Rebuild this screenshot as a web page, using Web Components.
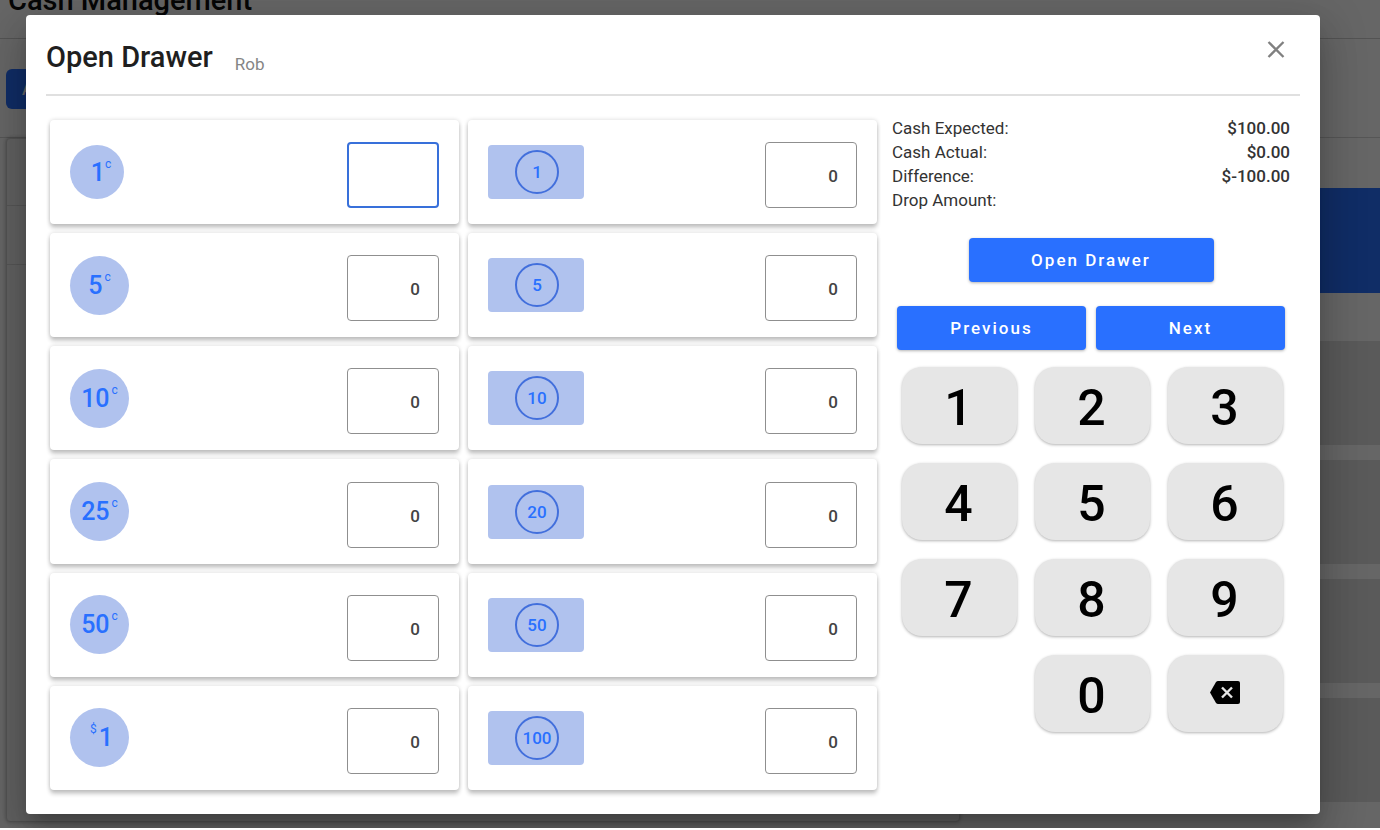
<!DOCTYPE html>
<html lang="en">
<head>
<meta charset="utf-8">
<meta name="viewport" content="width=device-width, initial-scale=1">
<title>Cash Management</title>
<style>
  :root {
    --brand: #2970ff;
    --brand-soft: #b0c2ee;
    --text: #1f1f1f;
    --text-body: #333;
    --text-muted: #858585;
    --line: #e0e0e0;
    --key: #e6e6e6;
  }
  body {
    margin: 0;
    background: #fff;
    color: var(--text-body);
    font-family: Roboto, "Liberation Sans", sans-serif;
    font-size: 16px;
  }
</style>
</head>
<body>
<cash-app>
  <cash-backdrop></cash-backdrop>
  <drawer-dialog slot="dialog" heading="Open Drawer" user="Rob">
    <denomination-grid></denomination-grid>
    <drawer-summary slot="side"></drawer-summary>
    <drawer-actions slot="side"></drawer-actions>
    <key-pad slot="side"></key-pad>
  </drawer-dialog>
</cash-app>

<script>
class CashApp extends HTMLElement {
  constructor() {
    super();
    this.attachShadow({ mode: 'open' });
  }

  connectedCallback() {
    this.shadowRoot.innerHTML = `
      <style>
        :host {
          display: grid;
          min-height: calc(100vh - 2px);
          overflow: hidden;
        }
        .page, .scrim {
          grid-area: 1 / 1;
          min-width: 0;
        }
        .page {
          height: 0;
          min-height: 100%;
          overflow: hidden;
        }
        .scrim {
          display: flex;
          z-index: 1;
          padding: 15px 60px 14px 26px;
          background: rgba(0, 0, 0, 0.6);
        }
        ::slotted(drawer-dialog) {
          flex: 1;
          min-width: 0;
        }
      </style>
      <div class="page"><slot></slot></div>
      <div class="scrim"><slot name="dialog"></slot></div>
    `;
    this.addEventListener('key-press', e => this.grid.press(e.detail.key));
    this.addEventListener('step', e => this.grid.step(e.detail.by));
  }

  get grid() {
    return this.querySelector('denomination-grid');
  }
}

// The cash management screen that stays visible around the dialog
class CashBackdrop extends HTMLElement {
  constructor() {
    super();
    this.attachShadow({ mode: 'open' });
  }

  connectedCallback() {
    this.shadowRoot.innerHTML = `
      <style>
        :host {
          display: block;
          margin-top: -20px;
        }
        h1 {
          margin: 0;
          padding: 0 8px;
          height: 59px;
          border-bottom: 1px solid #d0d0d0;
          font-size: 29px;
          line-height: 40px;
          font-weight: 500;
          color: #111;
          box-sizing: border-box;
        }
        .toolbar {
          padding: 30px 6px 28px;
        }
        .toolbar button {
          width: 140px;
          height: 40px;
          padding: 0 16px;
          border: 0;
          border-radius: 6px;
          background: var(--brand);
          color: #fff;
          font: 500 16px Roboto, sans-serif;
          text-align: left;
        }
        .columns {
          display: grid;
          grid-template-columns: 25fr 11fr;
          padding-left: 6px;
          border-top: 1px solid #d8d8d8;
        }
        .sheet {
          height: 682px;
          border: 1px solid #d0d0d0;
          border-radius: 4px;
          box-shadow: 0 0 4px rgba(0, 0, 0, 0.3);
          background: #f2f2f2;
        }
        .sheet div {
          margin-top: 66px;
          height: 58px;
          border: solid #d8d8d8;
          border-width: 1px 0;
        }
        .tiles {
          display: grid;
          gap: 15px;
          align-content: start;
          padding-top: 50px;
        }
        .banner {
          height: 105px;
          margin-bottom: 33px;
          background: var(--brand);
        }
        .tile {
          height: 104px;
          background: #e0e0e0;
        }
      </style>
      <h1>Cash Management</h1>
      <div class="toolbar"><button type="button" tabindex="-1">A</button></div>
      <div class="columns">
        <div class="sheet"><div></div></div>
        <div class="tiles">
          <div class="banner"></div>
          <div class="tile"></div>
          <div class="tile"></div>
          <div class="tile"></div>
          <div class="tile"></div>
        </div>
      </div>
    `;
  }
}

class DrawerDialog extends HTMLElement {
  constructor() {
    super();
    this.attachShadow({ mode: 'open' });
  }

  connectedCallback() {
    this.setAttribute('role', 'dialog');
    this.setAttribute('aria-label', this.getAttribute('heading'));
    this.shadowRoot.innerHTML = `
      <style>
        :host {
          display: flex;
          flex-direction: column;
          box-sizing: border-box;
          padding: 0 20px 24px;
          border-radius: 4px;
          background: #fff;
          box-shadow: 0 11px 15px -7px rgba(0, 0, 0, 0.2),
            0 24px 38px 3px rgba(0, 0, 0, 0.14),
            0 9px 46px 8px rgba(0, 0, 0, 0.12);
        }
        header {
          display: flex;
          align-items: flex-start;
          height: 81px;
          box-sizing: border-box;
          padding-top: 22px;
          border-bottom: 2px solid var(--line);
        }
        h2 {
          margin: 0;
          font-size: 29px;
          line-height: 40px;
          font-weight: 500;
          color: var(--text);
        }
        .user {
          flex: 1;
          margin-left: 22px;
          padding-top: 15px;
          font-size: 17px;
          line-height: 24px;
          color: var(--text-muted);
        }
        .close {
          width: 24px;
          height: 24px;
          margin-right: 12px;
          padding: 0;
          border: 0;
          background: none;
          cursor: pointer;
        }
        .close svg {
          display: block;
        }
        .body {
          flex: 1;
          display: grid;
          grid-template-columns: minmax(0, 1fr) 398px;
          gap: 15px;
          padding: 24px 10px 0 4px;
        }
        .side {
          display: flex;
          flex-direction: column;
        }
      </style>
      <header>
        <h2>${this.getAttribute('heading')}</h2>
        <span class="user">${this.getAttribute('user')}</span>
        <button class="close" type="button" aria-label="Close">
          <svg width="24" height="24" viewBox="0 0 24 24" fill="none" stroke="#808080" stroke-width="2.300">
            <path d="M4.500 5l15 15M19.500 5l-15 15"/>
          </svg>
        </button>
      </header>
      <div class="body">
        <slot></slot>
        <div class="side"><slot name="side"></slot></div>
      </div>
    `;
    this.shadowRoot.querySelector('.close').addEventListener('click', () => this.remove());
  }
}

class DenominationGrid extends HTMLElement {
  constructor() {
    super();
    this.attachShadow({ mode: 'open' });
    this.active = 0;
    this.items = [
      { type: 'penny', value: '1', unit: 'c' },
      { type: 'coin', value: '5', unit: 'c' },
      { type: 'coin', value: '10', unit: 'c' },
      { type: 'coin', value: '25', unit: 'c' },
      { type: 'coin', value: '50', unit: 'c' },
      { type: 'coin', value: '1', unit: '$' },
      { type: 'bill', value: '1' },
      { type: 'bill', value: '5' },
      { type: 'bill', value: '10' },
      { type: 'bill', value: '20' },
      { type: 'bill', value: '50' },
      { type: 'bill', value: '100' }
    ];
  }

  connectedCallback() {
    this.shadowRoot.innerHTML = `
      <style>
        :host {
          display: grid;
          grid-auto-flow: column;
          grid-template-rows: repeat(6, 1fr);
          grid-auto-columns: minmax(0, 1fr);
          gap: 9px;
        }
      </style>
      ${this.items.map((item, i) => `
        <denomination-card type="${item.type}" value="${item.value}" unit="${item.unit || ''}"
          count="${i === this.active ? '' : '0'}" ${i === this.active ? 'active' : ''}></denomination-card>
      `).join('')}
    `;
    this.cards = [...this.shadowRoot.querySelectorAll('denomination-card')];
  }

  step(by) {
    this.cards[this.active].removeAttribute('active');
    this.active = (this.active + by + this.cards.length) % this.cards.length;
    this.cards[this.active].setAttribute('active', '');
  }

  press(key) {
    const input = this.cards[this.active].input;
    if (key === 'back') {
      input.value = input.value.slice(0, -1);
      return;
    }
    input.value = input.value === '0' ? key : input.value + key;
  }
}

class DenominationCard extends HTMLElement {
  constructor() {
    super();
    this.attachShadow({ mode: 'open' });
  }

  get input() {
    return this.shadowRoot.querySelector('input');
  }

  connectedCallback() {
    const type = this.getAttribute('type');
    const value = this.getAttribute('value');
    const unit = this.getAttribute('unit');
    const sup = unit ? `<sup>${unit}</sup>` : '';
    const face = unit === '$' ? sup + value : value + sup;

    this.shadowRoot.innerHTML = `
      <style>
        :host {
          display: flex;
          align-items: center;
          justify-content: space-between;
          box-sizing: border-box;
          min-height: 96px;
          padding: 0 20px;
          border-radius: 4px;
          background: #fff;
          box-shadow: 0 4px 4px rgba(0, 0, 0, 0.2), 0 0 4px rgba(0, 0, 0, 0.16);
        }
        label {
          display: flex;
          align-items: center;
          justify-content: center;
          box-sizing: border-box;
          background: var(--brand-soft);
          color: var(--brand);
          font-weight: 500;
        }
        .penny, .coin {
          width: 59px;
          height: 59px;
          border-radius: 50%;
          font-size: 25px;
        }
        .penny {
          width: 54px;
          height: 54px;
          padding-left: 8px;
        }
        .coin {
          padding-left: 2px;
        }
        sup {
          align-self: flex-start;
          padding: 13px 2px 0;
          font-size: 12px;
          line-height: 16px;
          font-weight: 400;
        }
        .penny sup {
          padding: 11px 0 0;
        }
        .bill {
          width: 96px;
          height: 54px;
          padding-left: 2px;
          border-radius: 4px;
          font-size: 17px;
        }
        .bill span {
          display: flex;
          align-items: center;
          justify-content: center;
          width: 40px;
          height: 40px;
          border: 2px solid #426fdc;
          border-radius: 50%;
        }
        input {
          box-sizing: border-box;
          width: 92px;
          height: 66px;
          margin: 6px 0 0;
          padding: 2px 18px 0 8px;
          border: 1px solid #8f8f8f;
          border-radius: 4px;
          outline: 0;
          background: #fff;
          color: #444;
          font: 500 17px Roboto, sans-serif;
          text-align: right;
        }
        :host([active]) input {
          border: 2px solid #3870da;
        }
      </style>
      <label class="${type}" for="count">${type === 'bill' ? `<span>${value}</span>` : face}</label>
      <input id="count" type="text" inputmode="numeric" value="${this.getAttribute('count')}">
    `;
  }
}

class DrawerSummary extends HTMLElement {
  constructor() {
    super();
    this.attachShadow({ mode: 'open' });
    this.rows = [
      ['Cash Expected:', '$100.00'],
      ['Cash Actual:', '$0.00'],
      ['Difference:', '$-100.00'],
      ['Drop Amount:', '']
    ];
  }

  connectedCallback() {
    this.shadowRoot.innerHTML = `
      <style>
        :host {
          display: block;
          margin-top: -4px;
        }
        dl {
          display: grid;
          grid-template-columns: 1fr auto;
          grid-auto-rows: 24px;
          margin: 0;
          font-size: 17px;
          line-height: 24px;
        }
        dd {
          margin: 0;
          text-align: right;
          font-weight: 500;
        }
      </style>
      <dl>${this.rows.map(([name, amount]) => `<dt>${name}</dt><dd>${amount}</dd>`).join('')}</dl>
    `;
  }
}

class DrawerActions extends HTMLElement {
  constructor() {
    super();
    this.attachShadow({ mode: 'open' });
  }

  connectedCallback() {
    this.shadowRoot.innerHTML = `
      <style>
        :host {
          display: grid;
          grid-template-columns: 1fr 1fr;
          gap: 24px 10px;
          padding: 26px 5px 0;
        }
        button {
          height: 44px;
          padding: 0;
          border: 0;
          border-radius: 4px;
          background: var(--brand);
          box-shadow: 0 1px 3px rgba(0, 0, 0, 0.3);
          color: #fff;
          font: 500 17px Roboto, sans-serif;
          letter-spacing: 2px;
          cursor: pointer;
        }
        .open {
          grid-column: 1 / -1;
          justify-self: center;
          width: 245px;
        }
      </style>
      <button class="open" type="button">Open Drawer</button>
      <button type="button" data-by="-1">Previous</button>
      <button type="button" data-by="1">Next</button>
    `;

    this.shadowRoot.querySelectorAll('[data-by]').forEach(button => {
      button.addEventListener('click', () => {
        this.dispatchEvent(new CustomEvent('step', {
          detail: { by: Number(button.dataset.by) },
          bubbles: true,
          composed: true
        }));
      });
    });
  }
}

class KeyPad extends HTMLElement {
  constructor() {
    super();
    this.attachShadow({ mode: 'open' });
    this.keys = ['1', '2', '3', '4', '5', '6', '7', '8', '9', '0', 'back'];
  }

  connectedCallback() {
    const icon = `
      <svg width="30" height="23" viewBox="0 0 30 23" aria-hidden="true">
        <path fill="#000" d="M8 0h20q2 0 2 2v19q0 2-2 2H8q-1 0-2-1L0 11.500 6 1q1-1 2-1z"/>
        <path fill="none" stroke="#e6e6e6" stroke-width="2.400" d="M12 6.500l10 10M22 6.500l-10 10"/>
      </svg>`;

    this.shadowRoot.innerHTML = `
      <style>
        :host {
          display: grid;
          grid-template-columns: repeat(3, 1fr);
          grid-auto-rows: 77px;
          gap: 19px 18px;
          padding: 17px 7px 0 10px;
        }
        button {
          display: flex;
          align-items: center;
          justify-content: center;
          padding: 4px 2px 0 0;
          border: 0;
          border-radius: 20px;
          background: var(--key);
          box-shadow: 0 1px 3px rgba(0, 0, 0, 0.3);
          color: #000;
          font: 500 50px Roboto, sans-serif;
          cursor: pointer;
        }
        [data-key="0"] {
          grid-column: 2;
        }
        [data-key="back"] {
          padding: 0 2px 2px 0;
        }
      </style>
      ${this.keys.map(key => `
        <button type="button" data-key="${key}" ${key === 'back' ? 'aria-label="Backspace"' : ''}>${key === 'back' ? icon : key}</button>
      `).join('')}
    `;

    this.shadowRoot.querySelectorAll('button').forEach(button => {
      button.addEventListener('click', () => {
        this.dispatchEvent(new CustomEvent('key-press', {
          detail: { key: button.dataset.key },
          bubbles: true,
          composed: true
        }));
      });
    });
  }
}

customElements.define('cash-app', CashApp);
customElements.define('cash-backdrop', CashBackdrop);
customElements.define('drawer-dialog', DrawerDialog);
customElements.define('denomination-card', DenominationCard);
customElements.define('denomination-grid', DenominationGrid);
customElements.define('drawer-summary', DrawerSummary);
customElements.define('drawer-actions', DrawerActions);
customElements.define('key-pad', KeyPad);
</script>
</body>
</html>
